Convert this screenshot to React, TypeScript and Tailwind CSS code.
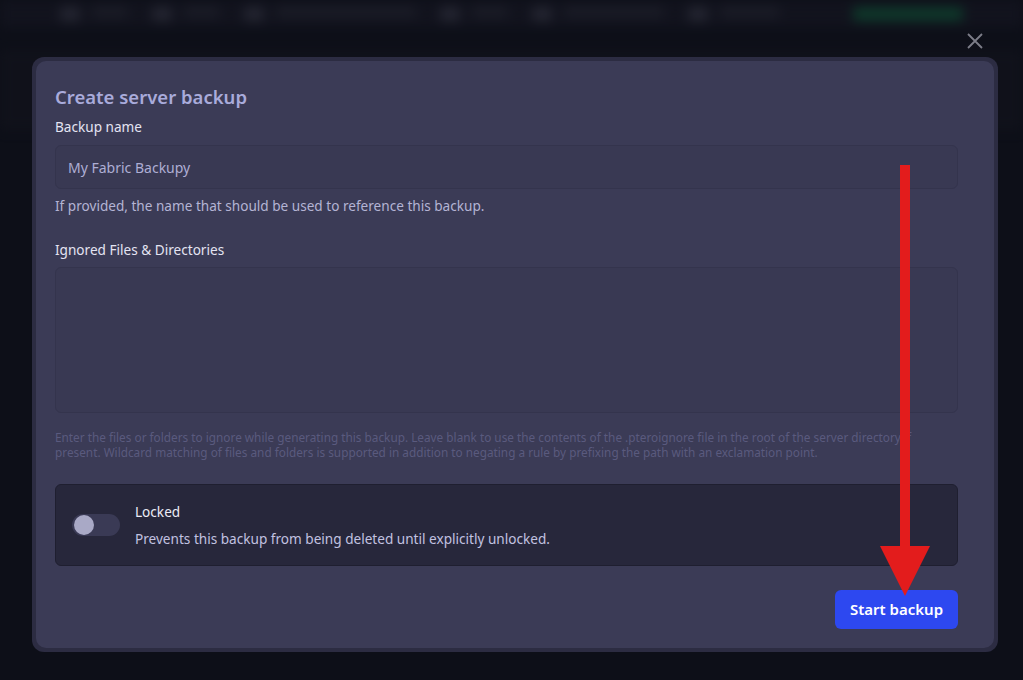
export default function App() {
  const font = { fontFamily: '"Noto Sans", "Open Sans", sans-serif' };
  return (
    <div
      className="relative w-[1023px] h-[680px] overflow-hidden bg-[#0d0f18]"
      style={font}
    >
      {/* blurred page behind the modal */}
      <div className="absolute inset-0 blur-[6px] opacity-70">
        <div className="h-[28px] bg-[#141520] flex items-center gap-6 px-[60px]">
          <div className="flex gap-3">
            <div className="w-[20px] h-[14px] rounded bg-[#2e2f3c]" />
            <div className="w-[36px] h-[10px] rounded bg-[#22232e]" />
          </div>
          <div className="flex gap-3">
            <div className="w-[20px] h-[14px] rounded bg-[#2e2f3c]" />
            <div className="w-[36px] h-[10px] rounded bg-[#22232e]" />
          </div>
          <div className="flex gap-3">
            <div className="w-[20px] h-[14px] rounded bg-[#2e2f3c]" />
            <div className="w-[140px] h-[10px] rounded bg-[#22232e]" />
          </div>
          <div className="flex gap-3">
            <div className="w-[20px] h-[14px] rounded bg-[#2e2f3c]" />
            <div className="w-[36px] h-[10px] rounded bg-[#22232e]" />
          </div>
          <div className="flex gap-3">
            <div className="w-[20px] h-[14px] rounded bg-[#2e2f3c]" />
            <div className="w-[100px] h-[10px] rounded bg-[#22232e]" />
          </div>
          <div className="flex gap-3">
            <div className="w-[20px] h-[14px] rounded bg-[#2e2f3c]" />
            <div className="w-[60px] h-[10px] rounded bg-[#22232e]" />
          </div>
          <div className="ml-auto w-[110px] h-[14px] rounded bg-[#0f4a32]" />
        </div>
        <div className="absolute top-[50px] left-0 right-0 h-[80px] bg-[#12131c]" />
      </div>

      {/* close button */}
      <button className="absolute top-[32px] left-[966px] text-[#7c7d88]">
        <svg width="18" height="18" viewBox="0 0 18 18" fill="none">
          <path d="M2 2L16 16M16 2L2 16" stroke="currentColor" strokeWidth="1.8" />
        </svg>
      </button>

      {/* modal */}
      <div className="absolute left-[32px] top-[57px] w-[966px] h-[595px] rounded-[12px] bg-[#2c2c42] p-[4px]">
        <div className="h-full rounded-[10px] bg-[#3b3b56] pl-[19px] pr-[36px] pt-[22px] flex flex-col">
          <h2 className="text-[18.5px] font-semibold leading-[28px] text-[#a9abdb]">
            Create server backup
          </h2>

          <label className="mt-[7px] text-[13.6px] leading-[18px] text-[#e4e4f2]">
            Backup name
          </label>
          <div className="mt-[9px] h-[44px] rounded-[6px] border border-[#34344d] bg-[#393953] flex items-center px-[12px] text-[14px] text-[#aeaed4]">
            My Fabric Backupy
          </div>
          <p className="mt-[8px] text-[13.6px] leading-[18px] text-[#b4b4d4]">
            If provided, the name that should be used to reference this backup.
          </p>

          <label className="mt-[26px] text-[13.6px] leading-[18px] text-[#e4e4f2]">
            Ignored Files &amp; Directories
          </label>
          <div className="mt-[8px] h-[146px] rounded-[6px] border border-[#34344d] bg-[#393953]" />
          <p className="mt-[17px] text-[11.8px] leading-[15px] text-[#5a5a7e] pr-[20px]">
            Enter the files or folders to ignore while generating this backup. Leave blank to use the contents of the .pteroignore file in the root of the server directory if present. Wildcard matching of files and folders is supported in addition to negating a rule by prefixing the path with an exclamation point.
          </p>

          <div className="mt-[24px] h-[82px] rounded-[6px] border border-[#1f1f30] bg-[#27273b] flex items-center pl-[16px]">
            <div className="w-[48px] h-[22px] rounded-full bg-[#3a3a55] flex items-center px-[2px]">
              <div className="w-[20px] h-[20px] rounded-full bg-[#a9a9c6]" />
            </div>
            <div className="ml-[15px] flex flex-col">
              <span className="text-[13.6px] leading-[18px] text-[#ececf6]">Locked</span>
              <span className="mt-[9px] text-[13.6px] leading-[18px] text-[#c2c2e0]">
                Prevents this backup from being deleted until explicitly unlocked.
              </span>
            </div>
          </div>

          <div className="mt-[24px] flex justify-end">
            <button className="h-[39px] w-[123px] rounded-[6px] bg-[#2d48f0] text-white text-[15px] font-semibold">
              Start backup
            </button>
          </div>
        </div>
      </div>

      {/* red arrow annotation */}
      <svg className="absolute left-0 top-0" width="1023" height="680" viewBox="0 0 1023 680">
        <rect x="900" y="165" width="10" height="385" fill="#e31c1c" />
        <polygon points="880,546 930,546 905,596" fill="#e31c1c" />
      </svg>
    </div>
  );
}
